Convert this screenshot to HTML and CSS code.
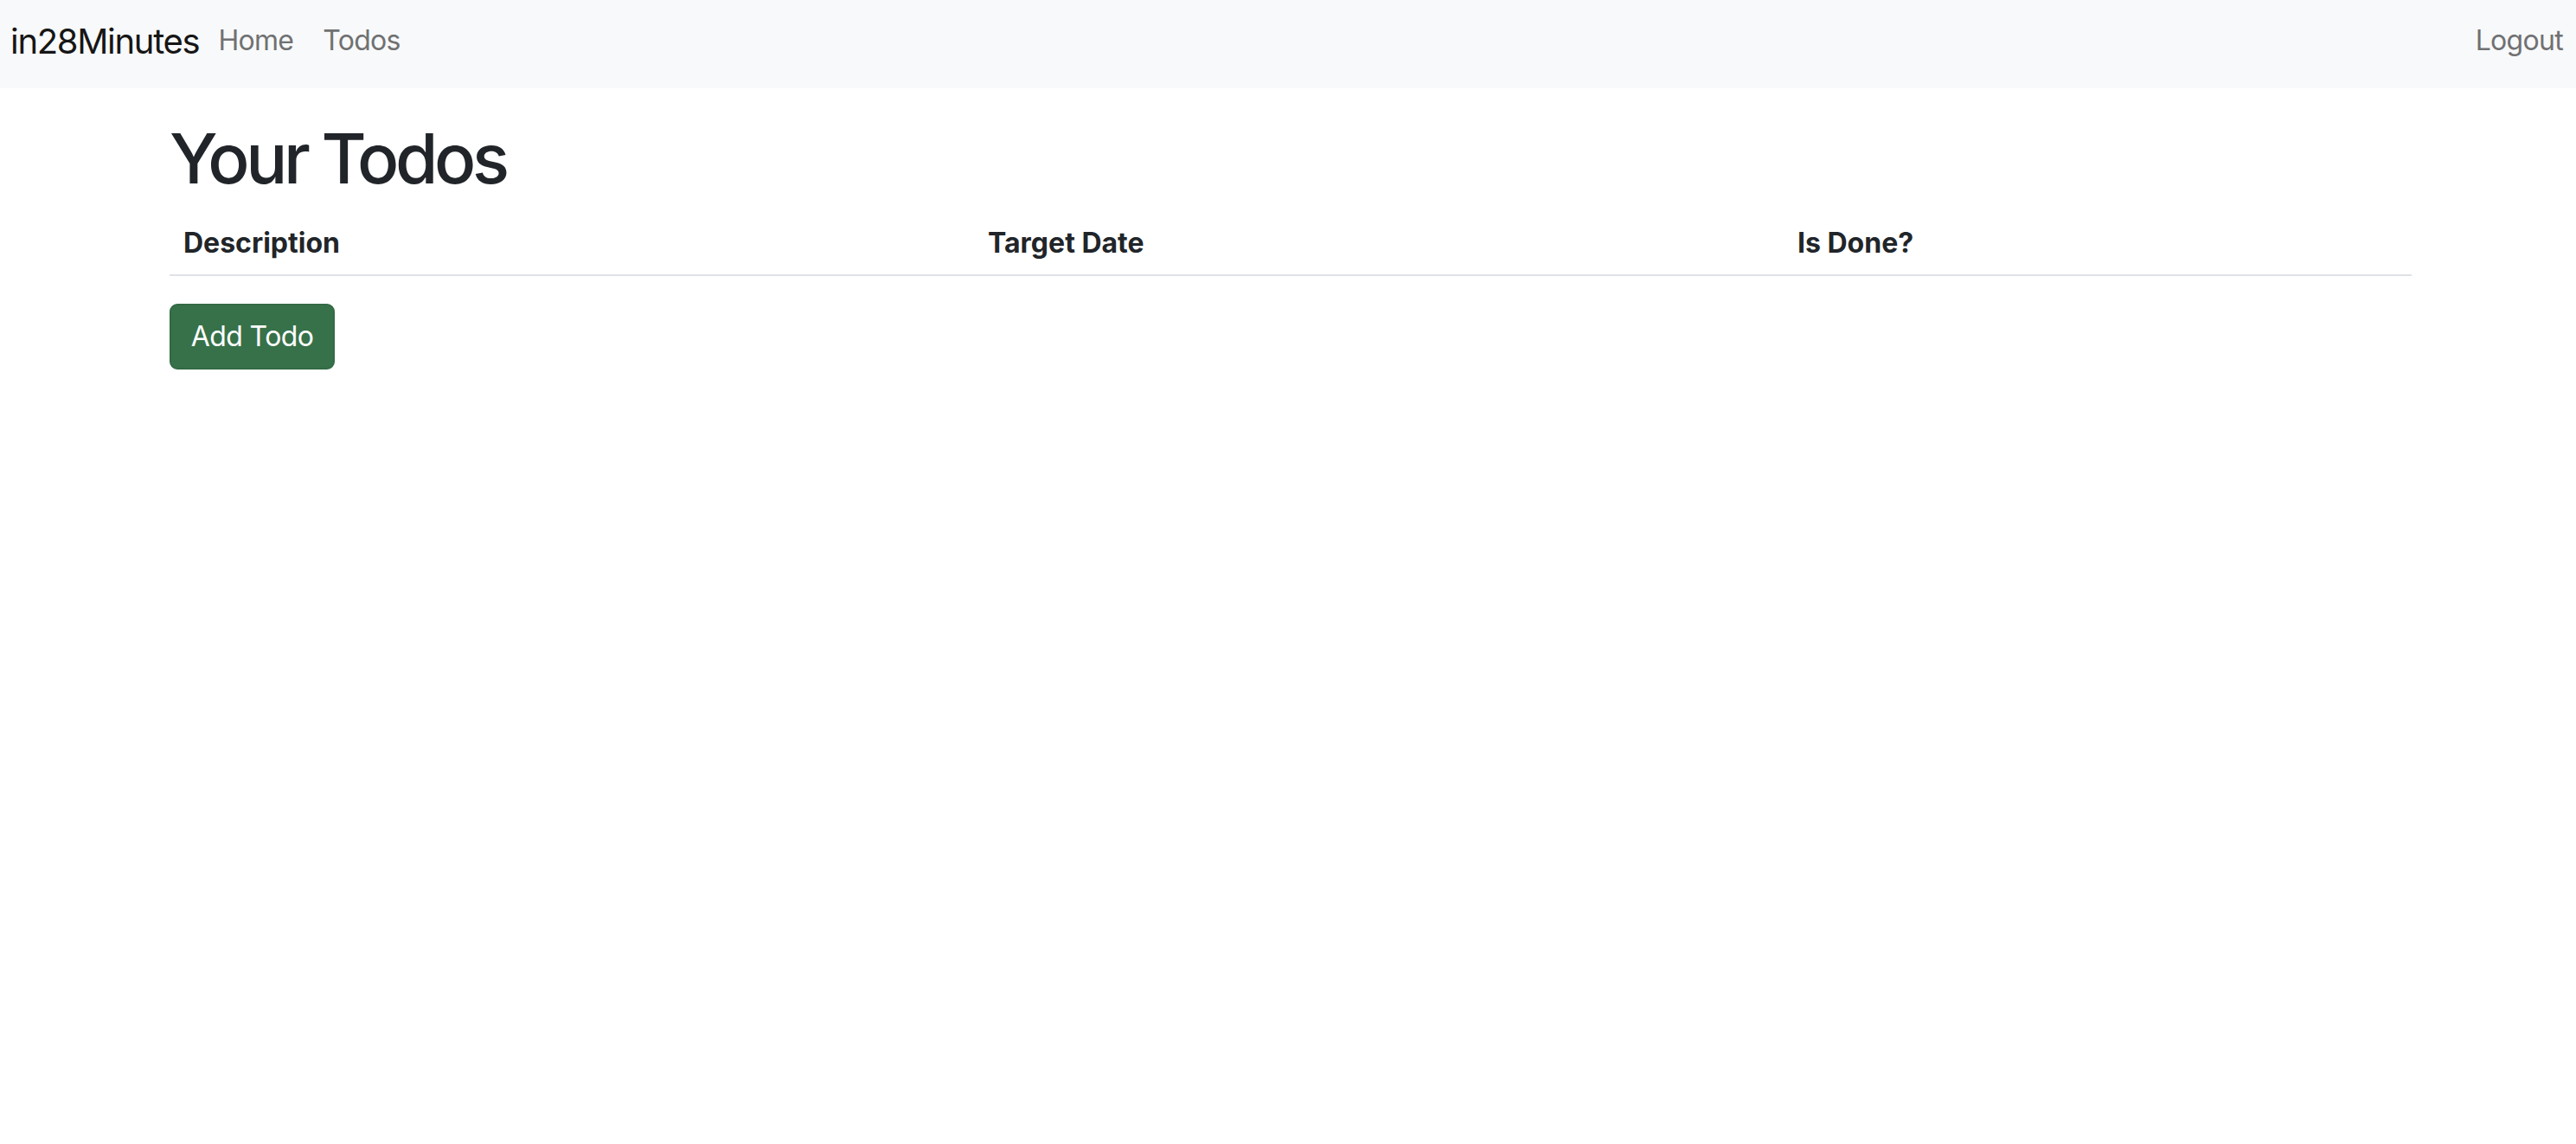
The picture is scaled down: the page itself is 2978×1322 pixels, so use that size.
FILE: index.html
```html
<!DOCTYPE html>
<html lang="en">
<head>
<meta charset="utf-8">
<title>Todo App</title>
<link rel="stylesheet" href="styles.css">
</head>
<body>
<nav class="navbar">
  <a class="brand" href="#">in28Minutes</a>
  <ul class="nav-links">
    <li><a class="nav-link" href="#">Home</a></li>
    <li><a class="nav-link" href="#">Todos</a></li>
  </ul>
  <ul class="nav-links nav-right">
    <li><a class="nav-link" href="#">Logout</a></li>
  </ul>
</nav>
<main class="container">
  <h1 class="title">Your Todos</h1>
  <table class="todo-table">
    <thead>
      <tr>
        <th class="col-desc">Description</th>
        <th class="col-date">Target Date</th>
        <th class="col-done">Is Done?</th>
      </tr>
    </thead>
    <tbody></tbody>
  </table>
  <button class="btn-add" type="button">Add Todo</button>
</main>
</body>
</html>
```

FILE: styles.css
```css
* { box-sizing: border-box; }

html, body {
  margin: 0;
  padding: 0;
  background: #ffffff;
  font-family: Inter, "Noto Sans", "Liberation Sans", sans-serif;
  color: #212529;
}

a { text-decoration: none; }

.navbar {
  height: 102px;
  background: #f8f9fa;
  display: flex;
  align-items: center;
  padding: 0 15px 8px 12px;
}

.brand {
  font-size: 40px;
  line-height: 1;
  color: #161616;
  letter-spacing: -1.3px;
  margin-right: 22px;
  margin-top: 2px;
}

.nav-links {
  list-style: none;
  margin: 0;
  padding: 0;
  display: flex;
  gap: 34px;
}

.nav-right {
  margin-left: auto;
}

.nav-link {
  font-size: 32px;
  line-height: 1;
  color: #707172;
  letter-spacing: -0.7px;
}

.container {
  width: 2592px;
  margin-left: 196px;
  padding-top: 33px;
}

.title {
  font-size: 80px;
  font-weight: 500;
  line-height: 96px;
  margin: 0 0 16px 0;
  color: #212529;
  letter-spacing: -4.4px;
}

.todo-table {
  width: 100%;
  border-collapse: collapse;
  margin-bottom: 32px;
}

.todo-table th {
  text-align: left;
  font-size: 32px;
  font-weight: 700;
  line-height: 48px;
  padding: 10px 16px 12px 16px;
  border-bottom: 2px solid #dee2e6;
  color: #212529;
}

.col-desc { width: 930px; }
.col-date { width: 936px; }

.btn-add {
  display: block;
  height: 76px;
  width: 191px;
  padding: 0;
  border: 2px solid #336a45;
  border-radius: 9px;
  background: #377149;
  color: #ffffff;
  font-family: inherit;
  font-size: 32px;
  line-height: 1;
  letter-spacing: -0.6px;
  text-align: center;
}
```
